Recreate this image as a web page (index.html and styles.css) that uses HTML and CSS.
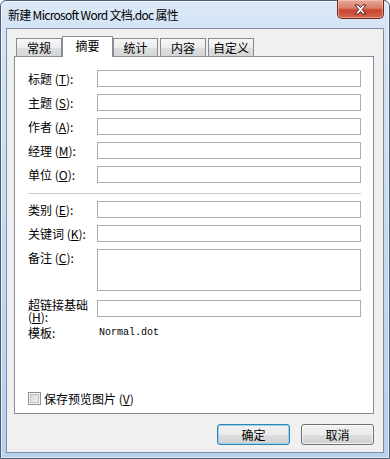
FILE: index.html
```html
<!DOCTYPE html>
<html lang="zh-CN">
<head>
    <meta charset="UTF-8">
    <title>新建 Microsoft Word 文档.doc 属性</title>
    <link rel="stylesheet" href="styles.css">
</head>
<body>
    <div class="window">
        <div class="titlebar">
            <span class="title">新建 Microsoft Word 文档.doc 属性</span>
            <button class="close" title="关闭">
                <svg width="13" height="11" viewBox="0 0 13 11">
                    <path d="M1 1h3.2l2.3 2.6L8.8 1H12L8.1 5.5 12 10H8.8L6.5 7.4 4.2 10H1l3.9-4.5z" fill="#fff" stroke="#3d1a14" stroke-width="0.9" stroke-linejoin="round"/>
                </svg>
            </button>
        </div>

        <div class="client">
            <div class="tabs">
                <div class="tab tab-first">常规</div>
                <div class="tab active">摘要</div>
                <div class="tab tab-flush">统计</div>
                <div class="tab">内容</div>
                <div class="tab">自定义</div>
            </div>

            <div class="panel">
                <div class="group">
                    <div class="row"><label>标题 (<u>T</u>):</label><input type="text"></div>
                    <div class="row"><label>主题 (<u>S</u>):</label><input type="text"></div>
                    <div class="row"><label>作者 (<u>A</u>):</label><input type="text"></div>
                    <div class="row"><label>经理 (<u>M</u>):</label><input type="text"></div>
                    <div class="row"><label>单位 (<u>O</u>):</label><input type="text"></div>
                </div>

                <div class="sep"></div>

                <div class="group">
                    <div class="row"><label>类别 (<u>E</u>):</label><input type="text"></div>
                    <div class="row"><label>关键词 (<u>K</u>):</label><input type="text"></div>
                    <div class="row"><label>备注 (<u>C</u>):</label><textarea></textarea></div>
                    <div class="row row-link"><label class="label-wrap">超链接基础 (<u>H</u>):</label><input type="text"></div>
                    <div class="row"><label>模板:</label><span class="mono">Normal.dot</span></div>
                </div>

                <div class="check-row">
                    <span class="checkbox"></span>
                    <span>保存预览图片 (<u>V</u>)</span>
                </div>
            </div>

            <div class="buttons">
                <button class="btn btn-default">确定</button>
                <button class="btn">取消</button>
            </div>
        </div>
    </div>
</body>
</html>
```

FILE: styles.css
```css
* {
    box-sizing: border-box;
    margin: 0;
    padding: 0;
}

body {
    font-family: "Noto Sans CJK SC", "Liberation Sans", sans-serif;
    font-size: 12px;
    color: #000;
    background: #fff;
}

/* window frame */
.window {
    width: 390px;
    height: 459px;
    display: flex;
    flex-direction: column;
    border: 1px solid #4e5f72;
    border-radius: 6px 6px 0 0;
    background: linear-gradient(180deg, #dce9f7 0, #d4e4f5 27px, #c3d9f1 60%, #b7d0ee 100%);
    box-shadow: inset 0 0 0 1px rgba(255, 255, 255, 0.55);
}

.titlebar {
    height: 27px;
    display: flex;
    align-items: flex-start;
}

.title {
    padding-left: 7px;
    line-height: 27px;
    font-size: 12px;
    letter-spacing: -0.7px;
    color: #000;
}

.close {
    margin-left: auto;
    margin-top: -1px;
    margin-right: 5px;
    width: 47px;
    height: 19px;
    display: flex;
    align-items: center;
    justify-content: center;
    border: 1px solid #6b2b22;
    border-top: none;
    border-radius: 0 0 5px 5px;
    background: linear-gradient(180deg, #e9a99b 0%, #d97d6a 45%, #c7452f 55%, #d4654c 100%);
    box-shadow: inset 0 0 0 1px rgba(255, 210, 200, 0.5);
}

.client {
    flex: 1;
    margin: 0 5px 5px;
    border: 1px solid #7f8ea0;
    background: #f0f0f0;
    padding: 7px 9px 7px 7px;
    display: flex;
    flex-direction: column;
}

/* tabs */
.tabs {
    height: 21px;
    margin-bottom: -1px;
    display: flex;
    align-items: flex-end;
    position: relative;
    z-index: 1;
}

.tab {
    height: 18px;
    margin-bottom: 1px;
    margin-left: 2px;
    width: 46px;
    border: 1px solid #898c95;
    border-bottom: none;
    background: linear-gradient(180deg, #f7f7f7 0%, #ececec 50%, #dedede 51%, #d6d6d6 100%);
    text-align: center;
    line-height: 17px;
}

.tab-first {
    width: 46px;
}

.tab-flush {
    margin-left: 0;
    width: 45px;
}

.tab.active {
    height: 21px;
    width: 51px;
    margin: 0;
    background: #fff;
    line-height: 18px;
}

.panel {
    height: 358px;
    border: 1px solid #898c95;
    background: #fff;
    padding: 13px 12px 6px 13px;
    display: flex;
    flex-direction: column;
}

.group {
    display: flex;
    flex-direction: column;
    gap: 7px;
}

.row {
    display: flex;
    align-items: flex-start;
}

.row label,
.row > span {
    width: 69px;
    height: 17px;
    flex-shrink: 0;
    line-height: 16px;
    padding-top: 1px;
    white-space: nowrap;
}

.row .mono {
    width: auto;
    padding-left: 2px;
    font-family: "Liberation Mono", monospace;
    font-size: 10px;
}

.row .label-wrap {
    white-space: normal;
    line-height: 12px;
    padding-top: 0;
    margin-top: -1px;
}

.row-link {
    margin-top: 2px;
}

input,
textarea {
    flex: 1;
    height: 17px;
    border: 1px solid #abadb3;
    background: #fff;
    font: inherit;
    resize: none;
}

textarea {
    height: 42px;
}

.sep {
    height: 1px;
    background: #cdcdcd;
    margin: 10px 0 7px;
}

.check-row {
    margin-top: auto;
    height: 17px;
    display: flex;
    align-items: center;
    gap: 3px;
}

.checkbox {
    width: 13px;
    height: 13px;
    border: 1px solid #8e8f8f;
    background: linear-gradient(135deg, #d6d6d6 0%, #f4f4f4 100%);
    box-shadow: inset 0 0 0 1px #f4f4f4, inset 0 0 0 2px #c0c0c0;
}

/* dialog buttons */
.buttons {
    margin-top: 10px;
    display: flex;
    justify-content: flex-end;
    gap: 11px;
}

.btn {
    width: 73px;
    height: 21px;
    border: 1px solid #707070;
    border-radius: 3px;
    background: linear-gradient(180deg, #f2f2f2 0%, #ebebeb 50%, #dddddd 51%, #cfcfcf 100%);
    box-shadow: inset 0 0 0 1px rgba(255, 255, 255, 0.7);
    font: inherit;
    color: #000;
}

.btn-default {
    border-color: #3c7fb1;
    box-shadow: inset 0 0 0 1px #8fd6f5;
}
```
